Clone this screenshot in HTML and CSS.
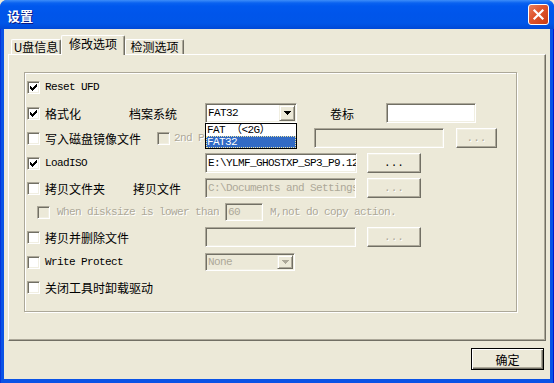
FILE: index.html
```html
<!DOCTYPE html>
<html lang="zh-CN">
<head>
<meta charset="utf-8">
<title>设置</title>
<link rel="stylesheet" href="styles.css">
</head>
<body>
<div class="window">
  <div class="titlebar">
    <span class="title">设置</span>
    <span class="close"><svg width="13" height="13" viewBox="0 0 13 13"><path d="M2.5 2.5L10.5 10.5M10.5 2.5L2.5 10.5" stroke="#fff" stroke-width="2.2" stroke-linecap="square"/></svg></span>
  </div>
  <div class="client">
    <div class="tabs">
      <div class="tab tab-info">U盘信息</div>
      <div class="tab tab-edit active">修改选项</div>
      <div class="tab tab-check">检测选项</div>
    </div>
    <div class="panel">
      <div class="group">
        <div class="row">
          <span class="cb"><svg width="7" height="7" viewBox="0 0 7 7" shape-rendering="crispEdges"><path d="M0 2h1v3H0zM1 3h1v3H1zM2 4h1v3H2zM3 3h1v3H3zM4 2h1v3H4zM5 1h1v3H5zM6 0h1v3H6z"/></svg></span>
          <span class="lbl en">Reset UFD</span>
        </div>
        <div class="row">
          <span class="cb"><svg width="7" height="7" viewBox="0 0 7 7" shape-rendering="crispEdges"><path d="M0 2h1v3H0zM1 3h1v3H1zM2 4h1v3H2zM3 3h1v3H3zM4 2h1v3H4zM5 1h1v3H5zM6 0h1v3H6z"/></svg></span>
          <span class="lbl w-fmt">格式化</span>
          <span class="txt w-fs">档案系统</span>
          <div class="combo-wrap">
            <div class="combo"><span class="combo-text en">FAT32</span><span class="drop"><svg width="7" height="4" viewBox="0 0 7 4" shape-rendering="crispEdges"><path d="M0 0h7v1H0zM1 1h5v1H1zM2 2h3v1H2zM3 3h1v1H3z"/></svg></span></div>
            <div class="droplist">
              <div class="opt en">FAT （&lt;2G）</div>
              <div class="opt en selected">FAT32</div>
            </div>
          </div>
          <span class="txt w-vol">卷标</span>
          <span class="field w-volin"></span>
        </div>
        <div class="row">
          <span class="cb"></span>
          <span class="lbl w-img">写入磁盘镜像文件</span>
          <span class="cb disabled"></span>
          <span class="txt en dis w-2nd">2nd Partition</span>
          <span class="field disabled w-2ndin"></span>
          <span class="btn disabled w-2ndbtn">...</span>
        </div>
        <div class="row">
          <span class="cb"><svg width="7" height="7" viewBox="0 0 7 7" shape-rendering="crispEdges"><path d="M0 2h1v3H0zM1 3h1v3H1zM2 4h1v3H2zM3 3h1v3H3zM4 2h1v3H4zM5 1h1v3H5zM6 0h1v3H6z"/></svg></span>
          <span class="lbl en w-long">LoadISO</span>
          <span class="field en w-path">E:\YLMF_GHOSTXP_SP3_P9.12.iso</span>
          <span class="btn w-browse">...</span>
        </div>
        <div class="row">
          <span class="cb"></span>
          <span class="lbl w-folder">拷贝文件夹</span>
          <span class="txt w-file">拷贝文件</span>
          <span class="field en disabled w-path2">C:\Documents and Settings</span>
          <span class="btn disabled w-browse2">...</span>
        </div>
        <div class="row indent">
          <span class="cb disabled"></span>
          <span class="txt en dis w-when">When disksize is lower than</span>
          <span class="field small en disabled w-size">60</span>
          <span class="txt en dis w-m">M,not do copy action.</span>
        </div>
        <div class="row">
          <span class="cb"></span>
          <span class="lbl w-long">拷贝并删除文件</span>
          <span class="field disabled w-path2"></span>
          <span class="btn disabled w-browse2">...</span>
        </div>
        <div class="row">
          <span class="cb"></span>
          <span class="lbl en w-long">Write Protect</span>
          <div class="combo small disabled w-none"><span class="combo-text en">None</span><span class="drop"><svg width="7" height="4" viewBox="0 0 7 4" shape-rendering="crispEdges"><path d="M0 0h7v1H0zM1 1h5v1H1zM2 2h3v1H2zM3 3h1v1H3z"/></svg></span></div>
        </div>
        <div class="row">
          <span class="cb"></span>
          <span class="lbl">关闭工具时卸载驱动</span>
        </div>
      </div>
    </div>
    <div class="footer">
      <span class="btn default">确定</span>
    </div>
  </div>
</div>
</body>
</html>
```

FILE: styles.css
```css
* { box-sizing: border-box; margin: 0; padding: 0; }
html, body { width: 554px; height: 383px; overflow: hidden; }
body {
  font-family: "Noto Sans CJK SC", sans-serif;
  font-size: 12px;
  color: #000;
  background: #ECE9D8;
}
.window {
  width: 554px;
  height: 383px;
  display: flex;
  flex-direction: column;
  background: linear-gradient(to right, #0019CF 0, #0A53E6 1px, #0A53E6 553px, #0019CF 553px);
  border-radius: 7px 7px 0 0;
  overflow: hidden;
}
.titlebar {
  height: 29px;
  flex: none;
  display: flex;
  align-items: center;
  padding: 0 5px 0 7px;
  background: linear-gradient(#3D8DF9 0, #0A62F0 3px, #0058EE 6px, #0055EA 50%, #0056E8 80%, #0049D6 100%);
}
.title {
  color: #fff;
  font-weight: bold;
  font-size: 13px;
  text-shadow: 1px 1px #0A1883;
  margin-top: 1px;
}
.close {
  margin-left: auto;
  width: 21px;
  height: 21px;
  border: 1px solid #fff;
  border-radius: 3px;
  background: linear-gradient(135deg, #E9805F 0, #E0572F 40%, #C83A14 100%);
  display: flex;
  align-items: center;
  justify-content: center;
}
.client {
  flex: 1;
  margin: 0 4px 4px 4px;
  background: #ECE9D8;
  padding: 6px 4px 0 4px;
  display: flex;
  flex-direction: column;
}
.tabs {
  height: 19px;
  flex: none;
  display: flex;
  align-items: flex-end;
  padding-left: 3px;
  position: relative;
  z-index: 1;
}
.tab {
  height: 15px;
  border: 1px solid;
  border-bottom: none;
  border-color: #fff #716F64 #716F64 #fff;
  box-shadow: inset -1px 0 #ACA899;
  border-radius: 2px 2px 0 0;
  text-align: center;
  line-height: 13px;
  background: #ECE9D8;
}
.tab.active {
  height: 20px;
  margin-bottom: -1px;
  line-height: 15px;
}
.tab-info { width: 50px; }
.tab-edit { width: 64px; }
.tab-check { width: 59px; }
.panel {
  height: 287px;
  flex: none;
  border: 1px solid;
  border-color: #fff #716F64 #716F64 #fff;
  box-shadow: inset -1px -1px #ACA899;
  padding: 17px 28px 28px 15px;
}
.group {
  height: 100%;
  border: 1px solid #ACA899;
  box-shadow: inset 1px 1px #fff, 1px 1px #fff;
  padding: 1px 2px;
  display: grid;
  grid-template-rows: 26px 26px 24px 26px 24px 24px 26px 24px 26px;
  align-content: start;
}
.row {
  display: flex;
  align-items: center;
  white-space: nowrap;
}
.row.indent { padding-left: 10px; }
.en {
  font-family: "Liberation Mono", "Noto Sans CJK SC", monospace;
  font-size: 11px;
  letter-spacing: -0.6px;
}
.cb {
  width: 13px;
  height: 13px;
  flex: none;
  background: #fff;
  border: 1px solid;
  border-color: #ACA899 #fff #fff #ACA899;
  box-shadow: inset 1px 1px #716F64, inset -1px -1px #F1EFE2;
  position: relative;
}
.cb svg { position: absolute; left: 2px; top: 2px; }
.cb.disabled { background: #ECE9D8; }
.lbl { margin-left: 5px; flex: none; }
.txt { flex: none; }
.dis { color: #ACA899; text-shadow: 1px 1px #fff; }
.field {
  height: 20px;
  flex: none;
  background: #fff;
  border: 1px solid;
  border-color: #ACA899 #fff #fff #ACA899;
  box-shadow: inset 1px 1px #716F64, inset -1px -1px #F1EFE2;
  padding-left: 2px;
  line-height: 18px;
  overflow: hidden;
  white-space: nowrap;
}
.field.small { height: 18px; line-height: 16px; }
.field.disabled { background: #ECE9D8; color: #ACA899; }
.btn {
  height: 20px;
  flex: none;
  background: #ECE9D8;
  border: 1px solid;
  border-color: #fff #716F64 #716F64 #fff;
  box-shadow: inset -1px -1px #ACA899, inset 1px 1px #F1EFE2;
  display: flex;
  align-items: center;
  justify-content: center;
  font-family: "Liberation Mono", monospace;
  font-size: 11px;
}
.btn.disabled { color: #ACA899; text-shadow: 1px 1px #fff; }
.btn.default {
  width: 73px;
  height: 22px;
  border: 1px solid #000;
  box-shadow: inset 1px 1px #fff, inset -1px -1px #716F64, inset -2px -2px #ACA899;
  font-family: "Noto Sans CJK SC", sans-serif;
  font-size: 12px;
}
.combo-wrap { position: relative; flex: none; }
.combo {
  width: 92px;
  height: 20px;
  flex: none;
  display: flex;
  background: #fff;
  border: 1px solid;
  border-color: #ACA899 #fff #fff #ACA899;
  box-shadow: inset 1px 1px #716F64, inset -1px -1px #F1EFE2;
  padding: 1px;
}
.combo.small { height: 18px; }
.combo.disabled { background: #ECE9D8; color: #ACA899; }
.combo-text { flex: 1; padding-left: 1px; line-height: 16px; overflow: hidden; }
.combo.small .combo-text { line-height: 14px; }
.drop {
  width: 16px;
  flex: none;
  background: #ECE9D8;
  border: 1px solid;
  border-color: #F1EFE2 #716F64 #716F64 #F1EFE2;
  box-shadow: inset 1px 1px #fff, inset -1px -1px #ACA899;
  display: flex;
  align-items: center;
  justify-content: center;
}
.combo.disabled .drop svg { fill: #ACA899; }
.droplist {
  position: absolute;
  left: 0;
  top: 100%;
  width: 92px;
  background: #fff;
  border: 1px solid #000;
  z-index: 2;
}
.opt { height: 12px; line-height: 12px; padding-left: 1px; }
.opt.selected {
  background: #316AC5;
  color: #fff;
  outline: 1px dotted #F0E4A0;
  outline-offset: -1px;
}
.w-fmt { width: 84px; }
.w-fs { width: 76px; }
.w-vol { margin-left: 33px; width: 56px; }
.w-volin { width: 90px; }
.w-img { width: 112px; }
.w-2nd { margin-left: 4px; width: 140px; }
.w-2ndin { width: 130px; }
.w-2ndbtn { margin-left: 12px; width: 41px; }
.w-long { width: 160px; }
.w-path { width: 152px; }
.w-browse { margin-left: 10px; width: 54px; }
.w-folder { width: 88px; }
.w-file { width: 72px; }
.w-path2 { width: 151px; }
.w-browse2 { margin-left: 11px; width: 54px; }
.w-when { margin-left: 7px; width: 168px; }
.w-size { width: 38px; }
.w-m { margin-left: 7px; }
.w-none { width: 90px; }
.footer {
  flex: 1;
  display: flex;
  justify-content: flex-end;
  align-items: flex-start;
  padding: 7px 2px 0 0;
}
```
